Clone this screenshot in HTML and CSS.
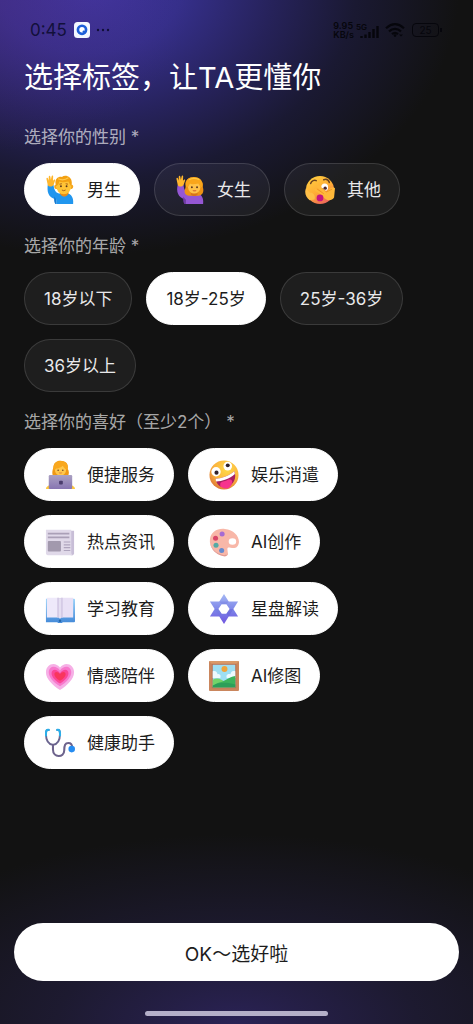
FILE: index.html
```html
<!DOCTYPE html>
<html lang="zh-CN">
<head>
    <meta charset="UTF-8">
    <meta name="viewport" content="width=device-width, initial-scale=1.0">
    <title>选择标签</title>
    <link rel="stylesheet" href="styles.css">
</head>
<body>
    <div class="page">
        <header class="status-bar">
            <span class="time">0:45</span>
            <svg class="app-icon" viewBox="0 0 16 16">
                <rect width="16" height="16" rx="3.5" fill="#f4f8ff"/>
                <circle cx="8" cy="7.8" r="5.4" fill="#1d5fd8"/>
                <circle cx="8" cy="7.8" r="2.7" fill="#fff"/>
                <circle cx="9.8" cy="9.6" r="1.2" fill="#1d5fd8"/>
            </svg>
            <svg class="more" viewBox="0 0 14 4">
                <circle cx="2" cy="2" r="1.2"/><circle cx="7" cy="2" r="1.2"/><circle cx="12" cy="2" r="1.2"/>
            </svg>
            <div class="status-right">
                <span class="speed">9.95<br>KB/s</span>
                <div class="signal">
                    <span class="net">5G</span>
                    <svg width="20" height="13" viewBox="0 0 20 13">
                        <path d="M2.5 13v-2M6.5 13V9.5M10.5 13V7M14.5 13V4M18.5 13V1" stroke="currentColor" stroke-width="2.4"/>
                    </svg>
                </div>
                <svg class="wifi" width="20" height="14" viewBox="0 0 20 14">
                    <path d="M1 5.2Q10-2.8 19 5.2M4 8.4Q10 3.2 16 8.4M7 11.2Q10 8.6 13 11.2" fill="none" stroke="currentColor" stroke-width="2.2"/>
                    <circle cx="10" cy="12.6" r="1.3" fill="currentColor"/>
                    <path d="M14 11.5h4l-2 2z" fill="currentColor"/>
                </svg>
                <div class="battery">25</div>
            </div>
        </header>

        <form class="content">
            <h1>选择标签，让TA更懂你</h1>

            <fieldset>
                <legend>选择你的性别 *</legend>
                <div class="chips">
                    <label class="chip with-icon">
                        <input type="radio" name="gender" checked>
                        <svg class="icon" viewBox="0 0 32 32">
                            <path d="M3 10C2 17 3 24 12 26v5h18c1-8-3-12-10-12-6 2-10 0-11-9z" fill="#2196ee"/>
                            <path d="M12 26v5h-1c-2-4-1-7-1-8z" fill="#1679cf"/>
                            <path d="M1.5 4c0-1.4 1.5-1.3 1.8 0L4 6V2c0-1.5 1.5-1.5 1.8 0l.4 3L7 1.500c.4-1.300 1.800-1 1.700.3L8.500 6l1-1c1.200-.6 1.700.4 1.200 1.200L9 11c-2 2-5 1.500-6 0z" fill="#ffb62c"/>
                            <path d="M16 17h9v3c-2 4-7 4-9 0z" fill="#e98b16"/>
                            <path d="M12 10c-3 0-3 5 1 5M28 10c3 0 3 5-1 5" fill="#f6a51d"/>
                            <ellipse cx="20" cy="12" rx="8" ry="8.600" fill="#ffc436"/>
                            <path d="M12 12C9 5 14 1 18 2c4-3 13 0 10 10-1-1-2-3-3-5-4 1-8 1-10 0 0 2-1 4-3 5z" fill="#f3a112"/>
                            <path d="M14 4c4 2 8 1 11-1" fill="none" stroke="#ffc94c" stroke-width="1.200"/>
                            <circle cx="17" cy="12" r="1" fill="#59351c"/><circle cx="23" cy="12" r="1" fill="#59351c"/>
                            <path d="M15.500 9.800l2.500-.5M22 9.300l2.500.5M18 16q2 1.500 4 0" fill="none" stroke="#a7601a" stroke-width="1"/>
                        </svg>
                        <span>男生</span>
                    </label>
                    <label class="chip with-icon">
                        <input type="radio" name="gender">
                        <svg class="icon" viewBox="0 0 32 32">
                            <path d="M3 10C1 17 3 24 11 26v5h19c1-8-3-12-10-12-6 2-10 0-11-9z" fill="#9557d4"/>
                            <path d="M11 26v5h-1c-2-4-1-7-1-8z" fill="#7139a8"/>
                            <path d="M1.500 4c0-1.400 1.500-1.300 1.800 0L4 6V2c0-1.500 1.500-1.500 1.800 0l.4 3L7 1.500c.4-1.300 1.800-1 1.700.3L8.500 6l1-1c1.200-.6 1.700.4 1.200 1.200L9 11c-2 2-5 1.500-6 0z" fill="#ffb62c"/>
                            <path d="M12 6c3-5 14-5 16 1 3 2 1 5 2 7 1 4-1 8-5 8H15c-4 0-6-4-4-8 1-3-1-5 1-8z" fill="#ed9215"/>
                            <path d="M17 17h7v4c-2 2-5 2-7 0z" fill="#d8741a"/>
                            <ellipse cx="20.500" cy="13" rx="6.500" ry="6.800" fill="#ffc24a"/>
                            <path d="M12 13C10 5 15 2 20 2s11 3 9 11c-2 0-3-2-4-4-4 1-8 1-9 0-1 2-2 4-4 4z" fill="#f9a61b"/>
                            <path d="M15 5q5-3 11 0" fill="none" stroke="#ffc843" stroke-width="1.300"/>
                            <circle cx="18" cy="13" r="1" fill="#55301d"/><circle cx="23.500" cy="13" r="1" fill="#55301d"/>
                            <path d="M18.500 16.500q2.500 1.800 4.500 0z" fill="#b9371e"/>
                        </svg>
                        <span>女生</span>
                    </label>
                    <label class="chip with-icon">
                        <input type="radio" name="gender">
                        <svg class="icon" viewBox="0 0 32 32">
                            <defs>
                                <linearGradient id="peek" x1="0" y1="0" x2=".6" y2="1">
                                    <stop offset="0" stop-color="#ffd342"/><stop offset=".6" stop-color="#ffad35"/><stop offset="1" stop-color="#ef6a59"/>
                                </linearGradient>
                            </defs>
                            <circle cx="16" cy="16" r="15" fill="url(#peek)"/>
                            <path d="M6 9c1-3 4-4 6-3M20 5c3-1 5 0 6 3" fill="none" stroke="#6b4420" stroke-width="1.600" stroke-linecap="round"/>
                            <ellipse cx="21" cy="13" rx="3.600" ry="4" fill="#fff"/>
                            <circle cx="21.500" cy="14" r="1.800" fill="#4d2a2c"/>
                            <path d="M32 14c-3-3-6 1-9 4l-8-7c-2-1-3 0-2 2l6 6-7-4c-2-1-3 1-1 2l8 5c2 5 9 7 12 2z" fill="#ffb93a"/>
                            <path d="M18 14l5 4 6-3M13 15l7 5" fill="none" stroke="#e98c22" stroke-width=".8"/>
                            <path d="M1 14c-2 5 0 10 4 13l5-1c2-4-2-8-5-7z" fill="#ffbf48"/>
                            <circle cx="16" cy="24.500" r="3.600" fill="#c5147e"/>
                        </svg>
                        <span>其他</span>
                    </label>
                </div>
            </fieldset>

            <fieldset>
                <legend>选择你的年龄 *</legend>
                <div class="chips">
                    <label class="chip"><input type="radio" name="age"><span>18岁以下</span></label>
                    <label class="chip"><input type="radio" name="age" checked><span>18岁-25岁</span></label>
                    <label class="chip"><input type="radio" name="age"><span>25岁-36岁</span></label>
                    <label class="chip"><input type="radio" name="age"><span>36岁以上</span></label>
                </div>
            </fieldset>

            <fieldset>
                <legend>选择你的喜好（至少2个） *</legend>
                <div class="chips">
                    <label class="chip with-icon">
                        <input type="checkbox" name="like" checked>
                        <svg class="icon" viewBox="0 0 32 32">
                            <defs>
                                <linearGradient id="laptop" x1="0" y1="0" x2="0" y2="1">
                                    <stop offset="0" stop-color="#aaa1c2"/><stop offset="1" stop-color="#8775b2"/>
                                </linearGradient>
                            </defs>
                            <path d="M1 31c0-2 2-4 5-4h21c3 0 5 2 5 4z" fill="#ffc83a"/>
                            <path d="M9 18C7 14 8 11 9 8c0-6 5-8 9-7 5 0 7 4 6 8 2 3 2 6 0 9z" fill="#f09814"/>
                            <ellipse cx="16.500" cy="10.500" rx="6" ry="6.200" fill="#ffc84d"/>
                            <path d="M9 11C8 4 12 1 17 1s9 4 7 10c-2-1-4-3-5-5-2 2-5 3-7 3-1 1-2 2-3 2z" fill="#f9a81e"/>
                            <circle cx="14" cy="11" r=".8" fill="#643b20"/><circle cx="19" cy="11" r=".8" fill="#643b20"/>
                            <path d="M14.500 13.500q2 1.500 4 0z" fill="#c53b25"/>
                            <rect x="4" y="16" width="25" height="15" rx="1.200" fill="url(#laptop)"/>
                            <rect x="15" y="22" width="4" height="4" rx="1" fill="#4b3d6d"/>
                        </svg>
                        <span>便捷服务</span>
                    </label>
                    <label class="chip with-icon">
                        <input type="checkbox" name="like" checked>
                        <svg class="icon" viewBox="0 0 32 32">
                            <defs>
                                <radialGradient id="zany" cx=".6" cy=".3" r=".75">
                                    <stop offset="0" stop-color="#ffdb48"/><stop offset=".6" stop-color="#fbb43d"/><stop offset="1" stop-color="#dc7335"/>
                                </radialGradient>
                            </defs>
                            <circle cx="16" cy="16" r="15.500" fill="url(#zany)"/>
                            <circle cx="7.500" cy="12.500" r="5" fill="#fff"/><circle cx="20" cy="6.500" r="4.600" fill="#fff"/>
                            <circle cx="8" cy="13.500" r="2.200" fill="#30202b"/><circle cx="20" cy="5.700" r="2.100" fill="#30202b"/>
                            <path d="M7 20c6 0 14-3 20-8 3 7-1 15-8 17C13 30 8 27 7 20z" fill="#a8205f"/>
                            <path d="M7 20c6 0 14-3 20-8l.6 3C22 20 14 23 7.500 23z" fill="#fff"/>
                            <path d="M12 25c2-3 6-2 8-4 4-1 6 1 4 5-2 5-7 6-12 2z" fill="#f7338e"/>
                        </svg>
                        <span>娱乐消遣</span>
                    </label>
                    <label class="chip with-icon">
                        <input type="checkbox" name="like" checked>
                        <svg class="icon" viewBox="0 0 32 32">
                            <path d="M27 4h4v24c0 3-5 3-5 0z" fill="#c8bed7"/>
                            <path d="M1 3h27v24c0 1.500.5 3 2 3H3c-1.200 0-2-.8-2-2z" fill="#e0d9e9"/>
                            <path d="M3 7h23M3 11h23" stroke="#aaa0b7" stroke-width="1.800"/>
                            <rect x="3" y="15" width="14" height="11" rx="1" fill="#a299ad"/>
                            <path d="M20 16h7M20 19h7M20 22h7M20 25h7" stroke="#aea4bd" stroke-width="1.200"/>
                        </svg>
                        <span>热点资讯</span>
                    </label>
                    <label class="chip with-icon">
                        <input type="checkbox" name="like" checked>
                        <svg class="icon" viewBox="0 0 32 32">
                            <path d="M1 13C2 5 9 1 17 2c9 1 15 7 15 14-1 7-5 7-9 6-5-1-3 2-3 5 1 4-2 5-5 4C6 28 0 21 1 13zm20 2.500a4 3.500 0 1 0 8 0 4 3.500 0 1 0-8 0" fill="#f8b7a8" fill-rule="evenodd"/>
                            <path d="M1 16c1 8 6 13 14 15 3 1 5-1 5-3-1 2-2 2-4 2C7 28 2 23 1 16z" fill="#df9993"/>
                            <circle cx="14" cy="7.500" r="2.700" fill="#a56bd3"/>
                            <circle cx="7" cy="12" r="2.700" fill="#d94769"/>
                            <circle cx="7.500" cy="19.500" r="2.700" fill="#55aaa5"/>
                            <circle cx="13.500" cy="25" r="2.700" fill="#668bcf"/>
                        </svg>
                        <span>AI创作</span>
                    </label>
                    <label class="chip with-icon">
                        <input type="checkbox" name="like" checked>
                        <svg class="icon" viewBox="0 0 32 32">
                            <defs>
                                <linearGradient id="cover" x1="0" y1="0" x2="0" y2="1">
                                    <stop offset="0" stop-color="#9bd3fa"/><stop offset="1" stop-color="#4389d8"/>
                                </linearGradient>
                            </defs>
                            <path d="M1 5h30c.6 0 1 .4 1 1v23c0 .6-.4 1-1 1H19l-1 1h-4l-1-1H1z" fill="url(#cover)"/>
                            <path d="M2 4h13l1 1v21l-1-1H2z" fill="#eee9fa"/>
                            <path d="M30 4H17l-1 1v21l1-1h13z" fill="#e9e1f6"/>
                            <path d="M13 4h2l1 1 1-1h2v21h-2l-1 1-1-1h-2z" fill="#d5cbe6"/>
                            <path d="M16 5v21" stroke="#f8f5ff"/>
                            <circle cx="16" cy="28.500" r="1.300" fill="#2466aa"/>
                        </svg>
                        <span>学习教育</span>
                    </label>
                    <label class="chip with-icon">
                        <input type="checkbox" name="like" checked>
                        <svg class="icon" viewBox="0 0 32 32">
                            <defs>
                                <linearGradient id="star" x1="0" y1="0" x2="0" y2="1">
                                    <stop offset="0" stop-color="#a4b8f3"/><stop offset=".55" stop-color="#7c83e8"/><stop offset="1" stop-color="#7055df"/>
                                </linearGradient>
                            </defs>
                            <path d="M16 0l5 8h10l-5 8 5 8H21l-5 8-5-8H1l5-8-5-8h10zM13.500 11L10 16l3.500 5h5l3.500-5-3.500-5z" fill="url(#star)" fill-rule="evenodd"/>
                            <path d="M11 8h10l-2.500 3h-5zM6 16h4l3.500 5-2.500 3z" fill="#6d75d9" opacity=".35"/>
                            <path d="M26 16h-4l-3.500 5 2.500 3z" fill="#5d55ce" opacity=".35"/>
                        </svg>
                        <span>星盘解读</span>
                    </label>
                    <label class="chip with-icon">
                        <input type="checkbox" name="like" checked>
                        <svg class="icon" viewBox="0 0 32 32">
                            <path d="M16 31C8 26 1 19 1 12c0-9 10-12 15-5 5-7 15-4 15 5 0 7-7 14-15 19z" fill="#f6b0e6"/>
                            <path d="M16 27C9 23 4 17 4 12c0-7 8-8 12-2 4-6 12-5 12 2 0 5-5 11-12 15z" fill="#f778cc"/>
                            <path d="M16 24c-5-3-9-7-9-11 0-5 6-5 9 0 3-5 9-5 9 0 0 4-4 8-9 11z" fill="#fa4697"/>
                            <path d="M16 21c-4-2-6-5-6-7 0-3 4-3 6 0 2-3 6-3 6 0 0 2-2 5-6 7z" fill="#f8365d"/>
                        </svg>
                        <span>情感陪伴</span>
                    </label>
                    <label class="chip with-icon">
                        <input type="checkbox" name="like" checked>
                        <svg class="icon" viewBox="0 0 32 32">
                            <rect width="32" height="32" rx="1" fill="#ca865d"/>
                            <path d="M0 0l4 4h24l4-4z" fill="#da9a69"/>
                            <path d="M3 3h26v26H3z" fill="#b96e51"/>
                            <path d="M4 4h24v24H4z" fill="#9edff3"/>
                            <path d="M4 11c3-1 5 1 5 3 3-1 4 2 3 4H4zM28 11c-4-1-5 2-5 3-4-1-5 2-4 4h9z" fill="#edfaff"/>
                            <circle cx="16.500" cy="8.500" r="3.200" fill="#efa43b"/>
                            <path d="M4 20c5-3 9-1 14 3v5H4z" fill="#75d36a"/>
                            <path d="M28 16c-7 1-11 6-17 7-3 1-6 2-7 5h24z" fill="#3bb35c"/>
                            <path d="M4 26c8-4 16-3 24-1v3H4z" fill="#2c9f59"/>
                        </svg>
                        <span>AI修图</span>
                    </label>
                    <label class="chip with-icon">
                        <input type="checkbox" name="like" checked>
                        <svg class="icon" viewBox="0 0 32 32" fill="none" stroke-linecap="round">
                            <path d="M4 2H3C1 2 1 4 1 6c0 7 2 11 7.500 12C14 17 16 13 16 6c0-2 0-4-2-4h-1" stroke="#6a648f" stroke-width="2"/>
                            <path d="M4 2H3C1 2 1 4 1 6v2M16 8V6c0-2 0-4-2-4h-1" stroke="#2bafea" stroke-width="2.200"/>
                            <path d="M8.500 18v5c0 9 12 9 12 1 0-6 1-8 4.500-8 3 0 4 2 4 5" stroke="#6d638c" stroke-width="2.200"/>
                            <circle cx="28.500" cy="22.500" r="3.500" fill="#258cf1"/>
                        </svg>
                        <span>健康助手</span>
                    </label>
                </div>
            </fieldset>
        </form>

        <footer>
            <button type="button" class="submit">OK～选好啦</button>
            <div class="home-indicator"></div>
        </footer>
    </div>
</body>
</html>
```
FILE: styles.css
```css
* {
    box-sizing: border-box;
}
body {
    margin: 0;
    background-color: #121212;
    color: #fff;
    font-family: Inter, "Noto Sans CJK SC", sans-serif;
    font-size: 17px;
}
.page {
    display: flex;
    flex-direction: column;
    min-height: 100vh;
    background:
        radial-gradient(ellipse 190px 150px at 0 0, rgba(84, 45, 135, 0.4), transparent),
        radial-gradient(ellipse 370px 270px at 90px -15px, #3f36a2, #352f8a 25%, #26225a 50%, #1a1932 72%, rgba(18, 18, 18, 0)),
        radial-gradient(ellipse 400px 190px at 50% 100%, #2a2255, #1d1a30 45%, rgba(18, 18, 18, 0));
}

/* status bar */
.status-bar {
    display: flex;
    align-items: center;
    height: 60px;
    padding: 0 31px 0 30px;
    color: #12103a;
}
.time {
    font-size: 17px;
}
.app-icon {
    width: 16px;
    height: 16px;
    margin-left: 7px;
}
.more {
    width: 14px;
    height: 4px;
    margin-left: 6px;
    fill: currentColor;
}
.status-right {
    display: flex;
    align-items: center;
    margin-left: auto;
    color: #06060c;
}
.speed {
    font-size: 9px;
    line-height: 9px;
    font-weight: 600;
}
.signal {
    display: flex;
    align-items: flex-end;
    height: 15px;
}
.signal svg {
    margin-left: -8px;
}
.net {
    align-self: flex-start;
    margin-left: 2px;
    font-size: 8px;
    line-height: 8px;
    font-weight: 600;
}
.wifi {
    margin-left: 6px;
}
.battery {
    position: relative;
    width: 27px;
    height: 14px;
    margin: 0 3px 0 7px;
    border: 1px solid currentColor;
    border-radius: 4px;
    font-size: 10px;
    line-height: 12px;
    text-align: center;
}
.battery::after {
    content: "";
    position: absolute;
    top: 4px;
    right: -4px;
    width: 2px;
    height: 4px;
    background-color: currentColor;
}

/* tag form */
.content {
    padding: 0 24px;
}
h1 {
    margin: 0 0 29px;
    font-size: 29px;
    line-height: 36px;
    font-weight: 400;
}
fieldset {
    min-width: 0;
    margin: 0 0 18px;
    padding: 0;
    border: none;
}
legend {
    margin-bottom: 14px;
    padding: 0;
    line-height: 24px;
    color: rgba(255, 255, 255, 0.65);
}
.chips {
    display: flex;
    flex-wrap: wrap;
    gap: 14px;
}
.chip {
    display: flex;
    align-items: center;
    gap: 12px;
    height: 53px;
    padding: 0 19px;
    border: 1px solid rgba(255, 255, 255, 0.13);
    border-radius: 27px;
    background-color: rgba(255, 255, 255, 0.05);
    color: #e8e8ea;
    line-height: 24px;
    white-space: nowrap;
    cursor: pointer;
}
.with-icon {
    padding: 0 18px 0 20px;
}
.chip:has(input:checked) {
    background-color: #fff;
    border-color: #fff;
    color: #1c1c1c;
}
.chip:has(input:focus-visible) {
    outline: 2px solid #6f63e0;
}
.chip input {
    position: absolute;
    opacity: 0;
    pointer-events: none;
}
.icon {
    width: 30px;
    height: 30px;
}

/* bottom button */
footer {
    margin-top: auto;
    padding: 0 14px 8px;
}
.submit {
    display: block;
    width: 100%;
    height: 58px;
    border: none;
    border-radius: 29px;
    background-color: #fff;
    color: #1c1c1c;
    font-family: inherit;
    font-size: 19px;
    cursor: pointer;
}
.home-indicator {
    width: 183px;
    height: 5px;
    margin: 30px auto 0;
    border-radius: 3px;
    background-color: #b4afc8;
}
```
